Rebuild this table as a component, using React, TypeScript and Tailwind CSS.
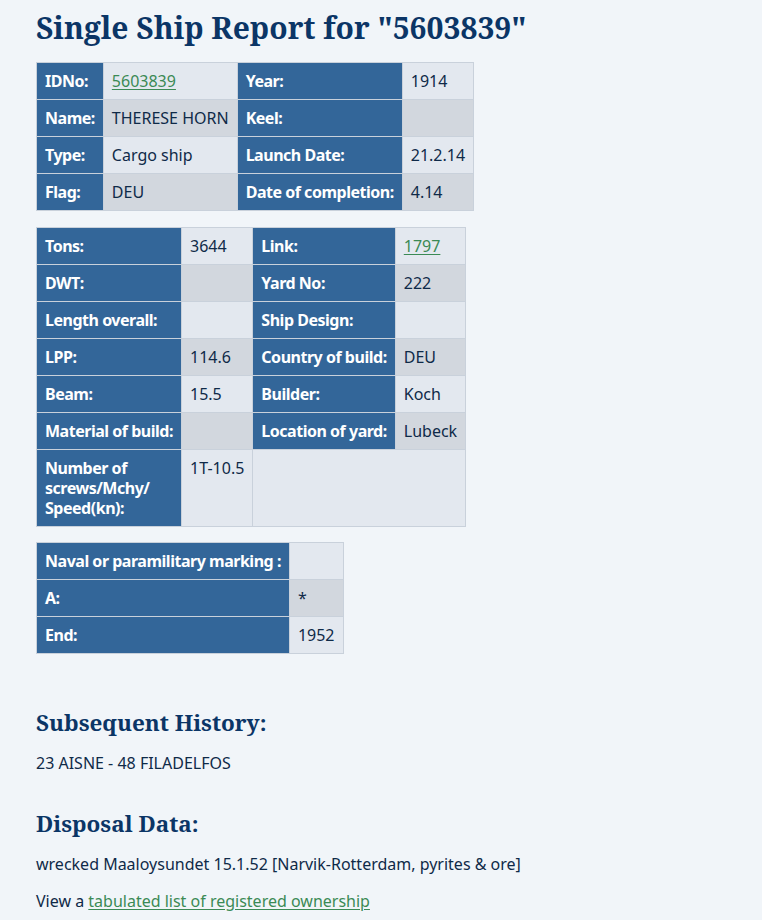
import React from "react";

const cell = "px-2 py-2 border border-[#c9d1db] align-top text-left";
const label = `bg-[#336699] text-white font-bold tracking-[-0.03em] whitespace-nowrap ${cell}`;
const light = `bg-[#e3e8ef] whitespace-nowrap ${cell}`;
const dark = `bg-[#d2d7de] whitespace-nowrap ${cell}`;
const link = "text-[#3b8a55] underline underline-offset-2";
const serif = { fontFamily: '"Noto Serif", "DejaVu Serif", serif' };

function Row({ a, b, c, d, shade }: { a: string; b: React.ReactNode; c: string; d: React.ReactNode; shade: string }) {
  return (
    <tr>
      <th className={label}>{a}</th>
      <td className={shade}>{b}</td>
      <th className={label}>{c}</th>
      <td className={shade}>{d}</td>
    </tr>
  );
}

export default function App() {
  return (
    <div
      className="min-h-[920px] bg-[#f1f5f9] px-9 pt-2 pb-4 text-[16px] leading-6 text-[#0f2a48]"
      style={{ fontFamily: '"Noto Sans", "Open Sans", sans-serif' }}
    >
      <h1 className="text-[30px] leading-[40px] font-bold text-[#0b3566] mb-3.5" style={serif}>
        Single Ship Report for "5603839"
      </h1>

      <table className="border-collapse mb-4 leading-5">
        <tbody>
          <Row a="IDNo:" b={<a href="#" className={link}>5603839</a>} c="Year:" d="1914" shade={light} />
          <Row a="Name:" b="THERESE HORN" c="Keel:" d="" shade={dark} />
          <Row a="Type:" b="Cargo ship" c="Launch Date:" d="21.2.14" shade={light} />
          <Row a="Flag:" b="DEU" c="Date of completion:" d="4.14" shade={dark} />
        </tbody>
      </table>

      <table className="border-collapse mb-[15px] leading-5">
        <tbody>
          <Row a="Tons:" b="3644" c="Link:" d={<a href="#" className={link}>1797</a>} shade={light} />
          <Row a="DWT:" b="" c="Yard No:" d="222" shade={dark} />
          <Row a="Length overall:" b="" c="Ship Design:" d="" shade={light} />
          <Row a="LPP:" b="114.6" c="Country of build:" d="DEU" shade={dark} />
          <Row a="Beam:" b="15.5" c="Builder:" d="Koch" shade={light} />
          <Row a="Material of build:" b="" c="Location of yard:" d="Lubeck" shade={dark} />
          <tr>
            <th className={`bg-[#336699] text-white font-bold tracking-[-0.03em] w-[144px] ${cell}`}>
              Number of screws/Mchy/ Speed(kn):
            </th>
            <td className={light}>1T-10.5</td>
            <td className={light} colSpan={2}></td>
          </tr>
        </tbody>
      </table>

      <table className="border-collapse mb-[53px] leading-5">
        <tbody>
          <tr>
            <th className={label}>Naval or paramilitary marking :</th>
            <td className={light}></td>
          </tr>
          <tr>
            <th className={label}>A:</th>
            <td className={dark}>*</td>
          </tr>
          <tr>
            <th className={label}>End:</th>
            <td className={light}>1952</td>
          </tr>
        </tbody>
      </table>

      <h2 className="text-[22.5px] leading-8 font-bold text-[#0b3566] mb-3" style={serif}>
        Subsequent History:
      </h2>
      <p className="mb-[33px]">23 AISNE - 48 FILADELFOS</p>

      <h2 className="text-[22.5px] leading-8 font-bold text-[#0b3566] mb-3" style={serif}>
        Disposal Data:
      </h2>
      <p className="mb-[13px]">wrecked Maaloysundet 15.1.52 [Narvik-Rotterdam, pyrites &amp; ore]</p>
      <p>
        View a <a href="#" className={link}>tabulated list of registered ownership</a>
      </p>
    </div>
  );
}
